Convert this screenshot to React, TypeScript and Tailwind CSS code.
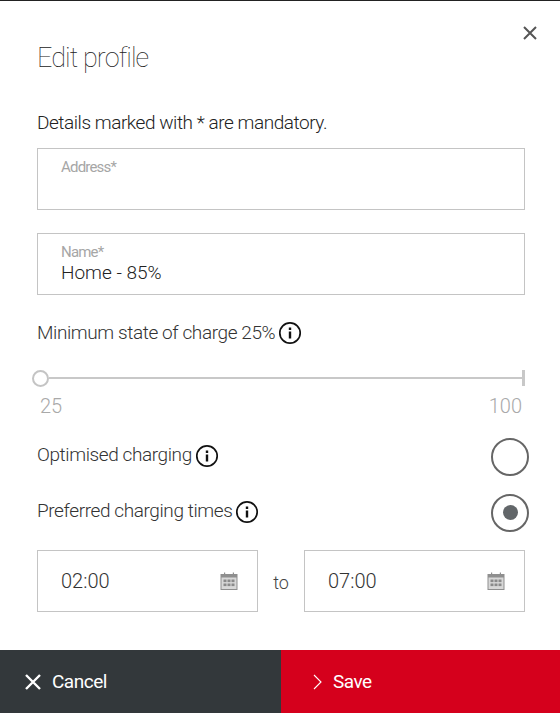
import React from "react";

const InfoIcon = () => (
  <svg width="24" height="24" viewBox="0 0 24 24" fill="none" className="shrink-0">
    <circle cx="12" cy="12" r="10.2" stroke="#111" strokeWidth="1.7" />
    <rect x="10.8" y="10.5" width="2.4" height="7" fill="#111" />
    <rect x="10.8" y="6.5" width="2.4" height="2.5" fill="#111" />
  </svg>
);

const CalendarIcon = () => (
  <svg width="18" height="18" viewBox="0 0 18 18" fill="none" className="shrink-0">
    <rect x="1" y="2.5" width="16" height="15" fill="#d8d8d8" stroke="#8f8f8f" strokeWidth="1" />
    <rect x="1" y="2.5" width="16" height="3" fill="#8f8f8f" />
    <rect x="4" y="0.5" width="1.2" height="3" fill="#8f8f8f" />
    <rect x="12.8" y="0.5" width="1.2" height="3" fill="#8f8f8f" />
    {[3.5, 7.5, 11.5].map((x) =>
      [7.5, 11.5].map((y) => (
        <rect key={`${x}-${y}`} x={x} y={y} width="3" height="2.6" fill="#8a8a8a" />
      ))
    )}
  </svg>
);

const Radio = ({ checked }: { checked?: boolean }) => (
  <div className="flex size-[38px] items-center justify-center rounded-full border-2 border-[#666]">
    {checked && <div className="size-[15px] rounded-full bg-[#626669]" />}
  </div>
);

const Field = ({ label, value }: { label: string; value?: string }) => (
  <div className="h-[62px] border border-[#c4c4c4] px-[23px] pt-[9px]">
    <div className="text-[15px] leading-[18px] tracking-[-0.8px] text-[#a6a6a6]">{label}</div>
    <div className="text-[19px] font-light leading-[24px] text-[#222]">{value}</div>
  </div>
);

const TimeField = ({ value }: { value: string }) => (
  <div className="flex h-[62px] w-[221px] items-center justify-between border border-[#c4c4c4] pl-[23px] pr-[19px]">
    <span className="text-[20px] font-light text-[#333]">{value}</span>
    <CalendarIcon />
  </div>
);

const OptionRow = ({ label, checked, className }: { label: string; checked?: boolean; className?: string }) => (
  <div className={`mr-[-4px] flex items-center justify-between ${className}`}>
    <div className="flex items-center gap-[3px] pb-[2px]">
      <span className="text-[19px] font-light tracking-[-0.4px] text-[#333]">{label}</span>
      <InfoIcon />
    </div>
    <Radio checked={checked} />
  </div>
);

export default function App() {
  return (
    <div className="flex h-[713px] w-[560px] flex-col overflow-hidden border-t border-[#222] bg-white font-['Roboto',sans-serif]">
      <div className="relative flex-1 pl-[37px] pr-[35px]">
        <button className="absolute right-[22px] top-[24px] text-[#555]">
          <svg width="16" height="16" viewBox="0 0 16 16" fill="none">
            <path d="M2 2L14 14M14 2L2 14" stroke="#555" strokeWidth="2" />
          </svg>
        </button>
        <h1 className="pt-[37px] text-[27px] font-thin leading-[40px] tracking-[-0.9px] text-[#222]">Edit profile</h1>
        <p className="mt-[33px] text-[19px] font-light leading-[24px] tracking-[-0.45px] text-[#222]">
          Details marked with * are mandatory.
        </p>
        <div className="mt-[13px]">
          <Field label="Address*" />
        </div>
        <div className="mt-[23px]">
          <Field label="Name*" value="Home - 85%" />
        </div>
        <div className="mt-[24px] flex items-center gap-[3px]">
          <span className="text-[19px] font-light tracking-[-0.4px] text-[#333]">Minimum state of charge 25%</span>
          <InfoIcon />
        </div>
        <div className="ml-[-5px] mt-[22px] flex items-center">
          <div className="size-[17px] shrink-0 rounded-full border-2 border-[#c4c4c4]" />
          <div className="h-[2px] flex-1 bg-[#c8c8c8]" />
          <div className="h-[16px] w-[3px] bg-[#c8c8c8]" />
        </div>
        <div className="mt-[6px] flex justify-between px-[3px] text-[20px] font-light leading-[26px] text-[#a9a9a9]">
          <span>25</span>
          <span>100</span>
        </div>
        <OptionRow className="mt-[19px]" label="Optimised charging" />
        <OptionRow className="mt-[18px]" label="Preferred charging times" checked />
        <div className="mt-[18px] flex items-center">
          <TimeField value="02:00" />
          <span className="flex-1 pt-[3px] text-center text-[18px] font-light text-[#444]">to</span>
          <TimeField value="07:00" />
        </div>
      </div>
      <div className="flex h-[63px] shrink-0">
        <button className="flex w-[281px] items-center gap-[11px] bg-[#33383b] pl-[25px] text-[19px] text-white">
          <svg width="16" height="16" viewBox="0 0 16 16" fill="none">
            <path d="M1 1L15 15M15 1L1 15" stroke="#fff" strokeWidth="2.4" />
          </svg>
          <span className="pt-[2px] tracking-[-0.5px]">Cancel</span>
        </button>
        <button className="flex flex-1 items-center gap-[11px] bg-[#d5001c] pl-[32px] text-[19px] text-white">
          <svg width="9" height="16" viewBox="0 0 9 16" fill="none">
            <path d="M1 1L8 8L1 15" stroke="#fff" strokeWidth="1.1" />
          </svg>
          <span className="pt-[2px] tracking-[-0.5px]">Save</span>
        </button>
      </div>
    </div>
  );
}
